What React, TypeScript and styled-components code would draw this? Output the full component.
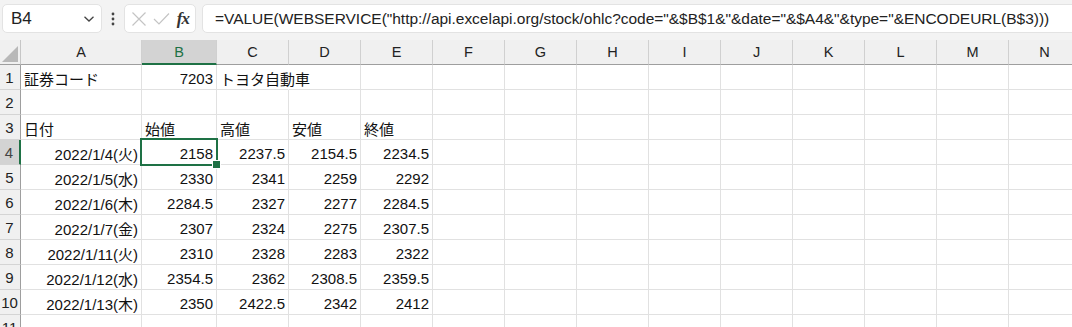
import React from "react";
import styled, { createGlobalStyle } from "styled-components";

const GlobalStyle = createGlobalStyle`
  html, body {
    margin: 0;
    padding: 0;
    background: #ffffff;
    overflow: hidden;
  }
  * { box-sizing: border-box; }
`;

const FONT = `"Liberation Sans", "Noto Sans CJK JP", sans-serif`;
const GREEN = "#1e7145";

const formula = `=VALUE(WEBSERVICE("http://api.excelapi.org/stock/ohlc?code="&$B$1&"&date="&$A4&"&type="&ENCODEURL(B$3)))`;

const columns = ["A", "B", "C", "D", "E", "F", "G", "H", "I", "J", "K", "L", "M", "N"];

type Cell = { text: string; align?: "left" | "right"; overflow?: boolean };

const rows: Cell[][] = [
  [{ text: "証券コード" }, { text: "7203", align: "right" }, { text: "トヨタ自動車", overflow: true }],
  [],
  [{ text: "日付" }, { text: "始値" }, { text: "高値" }, { text: "安値" }, { text: "終値" }],
  ...[
    ["2022/1/4(火)", "2158", "2237.5", "2154.5", "2234.5"],
    ["2022/1/5(水)", "2330", "2341", "2259", "2292"],
    ["2022/1/6(木)", "2284.5", "2327", "2277", "2284.5"],
    ["2022/1/7(金)", "2307", "2324", "2275", "2307.5"],
    ["2022/1/11(火)", "2310", "2328", "2283", "2322"],
    ["2022/1/12(水)", "2354.5", "2362", "2308.5", "2359.5"],
    ["2022/1/13(木)", "2350", "2422.5", "2342", "2412"],
  ].map((r) => r.map((t) => ({ text: t, align: "right" as const }))),
  [],
];

const Page = styled.div`
  width: 1072px;
  height: 327px;
  overflow: hidden;
  background: #f3f3f3;
  font-family: ${FONT};
`;

const Toolbar = styled.div`
  display: flex;
  align-items: center;
  height: 40px;
  padding: 4px 0 7px 2px;
`;

const Box = styled.div`
  height: 29px;
  background: #ffffff;
  border: 1px solid #e3e3e3;
  border-radius: 5px;
  display: flex;
  align-items: center;
`;

const NameBox = styled(Box)`
  width: 100px;
  padding: 0 6px 0 8px;
  justify-content: space-between;
  font-size: 17px;
  color: #222;
`;

const Dots = styled.div`
  width: 22px;
  display: flex;
  justify-content: center;
`;

const FxBox = styled(Box)`
  width: 72px;
  padding: 0 4px 0 6px;
  justify-content: space-between;
`;

const Fx = styled.span`
  font-family: "Liberation Serif", "DejaVu Serif", serif;
  font-style: italic;
  font-weight: bold;
  font-size: 17px;
  color: #333;
  letter-spacing: -1px;
  margin-right: 2px;
`;

const FormulaBox = styled(Box)`
  margin-left: 6px;
  flex: 1;
  margin-right: -10px;
  padding-left: 12px;
  font-size: 15.5px;
  letter-spacing: -0.02px;
  color: #222;
  white-space: nowrap;
  overflow: hidden;
`;

const Grid = styled.div`
  display: grid;
  grid-template-columns: 21px 121px 75px repeat(12, 72px);
  grid-auto-rows: 25px;
  background: #ffffff;
`;

const Corner = styled.div`
  background: #f0f0f0;
  border-right: 1px solid #c6c6c6;
  border-bottom: 1px solid #9e9e9e;
  position: relative;
  svg { position: absolute; right: 2px; bottom: 2px; }
`;

const ColHead = styled.div<{ $active?: boolean }>`
  background: ${(p) => (p.$active ? "#d3d3d3" : "#f0f0f0")};
  border-right: 1px solid #d0d0d0;
  border-bottom: ${(p) => (p.$active ? `2px solid ${GREEN}` : "1px solid #9e9e9e")};
  display: flex;
  align-items: center;
  justify-content: center;
  font-size: 14.5px;
  color: ${(p) => (p.$active ? GREEN : "#222")};
`;

const RowHead = styled.div<{ $active?: boolean }>`
  background: ${(p) => (p.$active ? "#d3d3d3" : "#f0f0f0")};
  border-right: ${(p) => (p.$active ? `2px solid ${GREEN}` : "1px solid #9e9e9e")};
  border-bottom: 1px solid #d4d4d4;
  display: flex;
  align-items: center;
  justify-content: center;
  font-size: 15px;
  color: ${(p) => (p.$active ? "#444" : "#222")};
  padding-right: 1px;
`;

const DataCell = styled.div<{ $align?: "left" | "right"; $overflow?: boolean; $selected?: boolean }>`
  position: relative;
  border-right: 1px solid #e1e1e1;
  border-bottom: 1px solid #e1e1e1;
  display: flex;
  align-items: center;
  justify-content: ${(p) => (p.$align === "right" ? "flex-end" : "flex-start")};
  padding: 2px 3px 0 3px;
  font-size: 15px;
  color: #111;
  white-space: nowrap;
  overflow: ${(p) => (p.$overflow || p.$selected ? "visible" : "hidden")};
  z-index: ${(p) => (p.$overflow || p.$selected ? 1 : 0)};
  ${(p) => (p.$overflow ? "border-right-color: transparent;" : "")}
`;

const Selection = styled.div`
  position: absolute;
  left: -2px;
  top: -2px;
  right: -2px;
  bottom: -2px;
  border: 2px solid ${GREEN};
  pointer-events: none;
  &::after {
    content: "";
    position: absolute;
    right: -5px;
    bottom: -5px;
    width: 7px;
    height: 7px;
    background: ${GREEN};
    border: 1px solid #ffffff;
  }
`;

const Chevron = () => (
  <svg width="12" height="8" viewBox="0 0 12 8">
    <path d="M1.5 1.8 L6 6 L10.5 1.8" fill="none" stroke="#444" strokeWidth="1.3" />
  </svg>
);

const DotsIcon = () => (
  <svg width="4" height="14" viewBox="0 0 4 14">
    <circle cx="2" cy="2" r="1.4" fill="#444" />
    <circle cx="2" cy="7" r="1.4" fill="#444" />
    <circle cx="2" cy="12" r="1.4" fill="#444" />
  </svg>
);

const CrossIcon = () => (
  <svg width="16" height="16" viewBox="0 0 16 16">
    <path d="M1.5 1.5 L14.5 14.5 M14.5 1.5 L1.5 14.5" stroke="#c4c4c4" strokeWidth="1.2" />
  </svg>
);

const CheckIcon = () => (
  <svg width="17" height="14" viewBox="0 0 17 14">
    <path d="M1 7 L6 12 L16 1.5" fill="none" stroke="#c4c4c4" strokeWidth="1.2" />
  </svg>
);

export default function App() {
  return (
    <Page>
      <GlobalStyle />
      <Toolbar>
        <NameBox>
          <span>B4</span>
          <Chevron />
        </NameBox>
        <Dots>
          <DotsIcon />
        </Dots>
        <FxBox>
          <CrossIcon />
          <CheckIcon />
          <Fx>fx</Fx>
        </FxBox>
        <FormulaBox>{formula}</FormulaBox>
      </Toolbar>
      <Grid>
        <Corner>
          <svg width="16" height="16" viewBox="0 0 16 16">
            <path d="M16 0 L16 16 L0 16 Z" fill="#b8b8b8" />
          </svg>
        </Corner>
        {columns.map((c) => (
          <ColHead key={c} $active={c === "B"}>
            {c}
          </ColHead>
        ))}
        {rows.map((row, ri) => (
          <React.Fragment key={ri}>
            <RowHead $active={ri === 3}>{ri + 1}</RowHead>
            {columns.map((c, ci) => {
              const cell = row[ci];
              const selected = ri === 3 && ci === 1;
              return (
                <DataCell
                  key={c}
                  $align={cell?.align}
                  $overflow={cell?.overflow}
                  $selected={selected}
                >
                  {cell?.text}
                  {selected && <Selection />}
                </DataCell>
              );
            })}
          </React.Fragment>
        ))}
      </Grid>
    </Page>
  );
}
